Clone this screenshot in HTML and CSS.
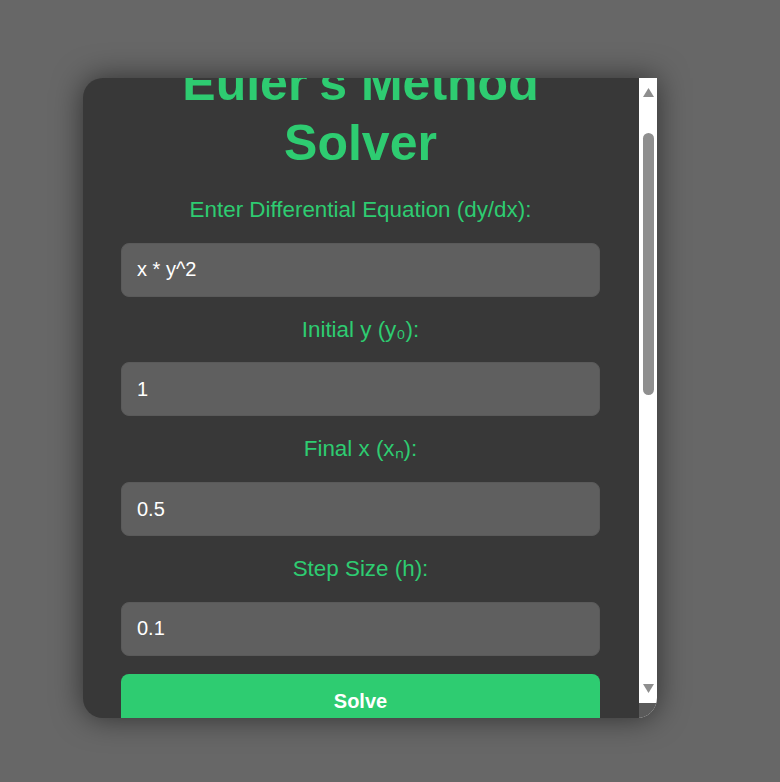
FILE: index.html
```html
<!DOCTYPE html>
<html lang="en">
<head>
<meta charset="UTF-8">
<title>Euler's Method Solver</title>
<link rel="stylesheet" href="styles.css">
</head>
<body>
<div class="card">
  <div class="scroller" id="scroller">
    <h1 class="title">Euler's Method Solver</h1>
    <form class="form">
      <label class="label" for="eq">Enter Differential Equation (dy/dx):</label>
      <input class="field" id="eq" type="text" value="x * y^2">
      <label class="label" for="y0">Initial y (y₀):</label>
      <input class="field" id="y0" type="text" value="1">
      <label class="label" for="xn">Final x (xₙ):</label>
      <input class="field" id="xn" type="text" value="0.5">
      <label class="label" for="h">Step Size (h):</label>
      <input class="field field-last" id="h" type="text" value="0.1">
      <button class="solve" type="button">Solve</button>
    </form>
    <div class="results"></div>
  </div>
  <div class="scrollbar" aria-hidden="true">
    <div class="sb-btn sb-up">
      <svg width="11" height="9" viewBox="0 0 11 9"><path d="M0 9 L5.5 0 L11 9 Z" fill="#8e8e8e"/></svg>
    </div>
    <div class="sb-track"><div class="sb-thumb"></div></div>
    <div class="sb-btn sb-down">
      <svg width="11" height="9" viewBox="0 0 11 9"><path d="M0 0 L11 0 L5.5 9 Z" fill="#8e8e8e"/></svg>
    </div>
    <div class="sb-corner"></div>
  </div>
</div>
<script src="script.js"></script>
</body>
</html>
```
FILE: styles.css
```css
html, body {
  margin: 0;
  padding: 0;
}
body {
  background: #676767;
  font-family: "Liberation Sans", Arial, sans-serif;
  height: 782px;
  box-sizing: border-box;
  padding: 78px 0 0 83px;
  overflow: hidden;
}
.card {
  display: flex;
  width: 574px;
  height: 640px;
  background: #383838;
  border-radius: 20px 0 20px 20px;
  box-shadow: 0 0 30px rgba(0, 0, 0, 0.55);
  overflow: hidden;
}
.scroller {
  flex: 1;
  min-width: 0;
  overflow: hidden;
  box-sizing: border-box;
  padding: 61px 39px 38px 38px;
}
.scrollbar {
  width: 18px;
  flex: none;
  display: flex;
  flex-direction: column;
  background: #ffffff;
}
.sb-btn {
  display: flex;
  justify-content: center;
  padding-left: 1px;
}
.sb-up {
  height: 20px;
  align-items: flex-start;
  padding-top: 10px;
  box-sizing: border-box;
}
.sb-down {
  height: 23px;
  align-items: flex-start;
  padding-top: 4px;
  box-sizing: border-box;
}
.sb-btn svg {
  display: block;
}
.sb-track {
  flex: 1;
  padding: 35px 3px 0 4px;
}
.sb-thumb {
  height: 262px;
  border-radius: 6px;
  background: #8f8f8f;
}
.sb-corner {
  height: 15px;
  background: #5a5a5a;
}
.title {
  margin: 0 0 24px;
  color: #2ecc71;
  font-size: 50px;
  line-height: 60px;
  font-weight: bold;
  text-align: center;
}
.form {
  display: flex;
  flex-direction: column;
}
.label {
  display: block;
  color: #2ecc71;
  font-size: 22.4px;
  line-height: 25.7px;
  height: 25.7px;
  text-align: center;
  margin: 0 0 20px;
}
.field {
  display: block;
  box-sizing: border-box;
  width: 100%;
  height: 54px;
  padding: 0 15px;
  margin: 0 0 20px;
  border: 1px solid #5a5a5a;
  border-radius: 8px;
  background: #5f5f5f;
  color: #ffffff;
  font-family: "Liberation Sans", Arial, sans-serif;
  font-size: 20px;
  outline: none;
}
.field-last {
  margin-bottom: 18.6px;
}
.solve {
  display: block;
  width: 100%;
  height: 54px;
  padding: 15px;
  border: none;
  border-radius: 8px;
  background: #2ecc71;
  color: #ffffff;
  font-family: "Liberation Sans", Arial, sans-serif;
  font-size: 20px;
  font-weight: bold;
}
.results {
  height: 200px;
}
```
FILE: script.js
```js
document.getElementById('scroller').scrollTop = 86;
```
